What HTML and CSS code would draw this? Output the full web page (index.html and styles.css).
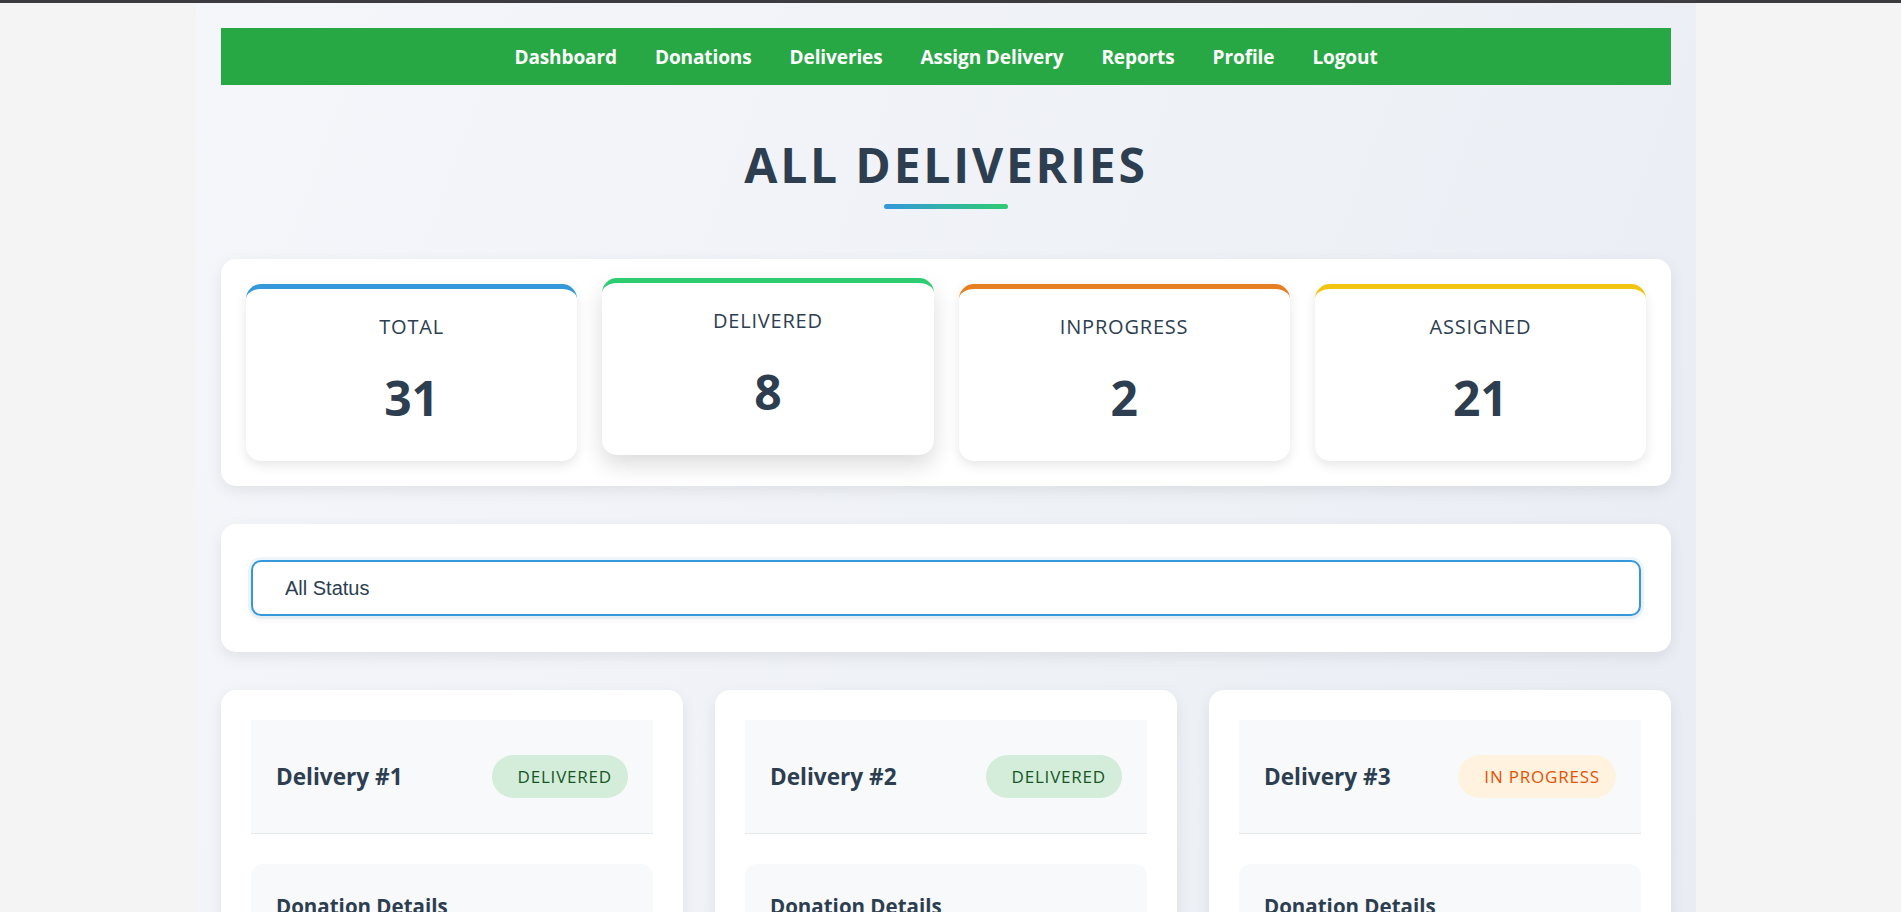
FILE: index.html
```html
<!DOCTYPE html>
<html lang="en">
<head>
<meta charset="utf-8">
<title>All Deliveries</title>
<link rel="stylesheet" href="styles.css">
</head>
<body>
<div class="topline"></div>
<div class="page">
  <div class="container">
    <nav class="navbar">
      <a href="#">Dashboard</a>
      <a href="#">Donations</a>
      <a href="#">Deliveries</a>
      <a href="#">Assign Delivery</a>
      <a href="#">Reports</a>
      <a href="#">Profile</a>
      <a href="#">Logout</a>
    </nav>

    <header class="page-header">
      <h1 class="page-title">ALL DELIVERIES</h1>
      <div class="title-underline"></div>
    </header>

    <section class="stats">
      <div class="stat-card stat-total">
        <div class="stat-label">TOTAL</div>
        <div class="stat-value">31</div>
      </div>
      <div class="stat-card stat-delivered is-hover">
        <div class="stat-label">DELIVERED</div>
        <div class="stat-value">8</div>
      </div>
      <div class="stat-card stat-progress">
        <div class="stat-label">INPROGRESS</div>
        <div class="stat-value">2</div>
      </div>
      <div class="stat-card stat-assigned">
        <div class="stat-label">ASSIGNED</div>
        <div class="stat-value">21</div>
      </div>
    </section>

    <section class="filter">
      <select class="status-select">
        <option>All Status</option>
        <option>Delivered</option>
        <option>In Progress</option>
        <option>Assigned</option>
      </select>
    </section>

    <section class="deliveries">
      <article class="delivery-card">
        <div class="delivery-header">
          <h2 class="delivery-title">Delivery #1</h2>
          <span class="badge badge-delivered">DELIVERED</span>
        </div>
        <div class="details-box">
          <h3 class="details-title">Donation Details</h3>
        </div>
      </article>
      <article class="delivery-card">
        <div class="delivery-header">
          <h2 class="delivery-title">Delivery #2</h2>
          <span class="badge badge-delivered">DELIVERED</span>
        </div>
        <div class="details-box">
          <h3 class="details-title">Donation Details</h3>
        </div>
      </article>
      <article class="delivery-card">
        <div class="delivery-header">
          <h2 class="delivery-title">Delivery #3</h2>
          <span class="badge badge-progress">IN PROGRESS</span>
        </div>
        <div class="details-box">
          <h3 class="details-title">Donation Details</h3>
        </div>
      </article>
    </section>
  </div>
</div>
</body>
</html>
```

FILE: styles.css
```css
* {
  box-sizing: border-box;
}

html, body {
  margin: 0;
  padding: 0;
}

body {
  background: #f4f4f4;
  font-family: "Open Sans", "Noto Sans", "DejaVu Sans", sans-serif;
  color: #2c3e50;
}

.topline {
  height: 3px;
  background: #3b3b40;
}

.page {
  padding-right: 9px;
}

.container {
  width: 1500px;
  margin: 0 auto;
  padding: 25px 25px 60px;
  background: linear-gradient(110deg, #f5f6fa 0%, #eef1f6 55%, #e8ebf2 100%);
  min-height: 1400px;
}

/* Navbar */
.navbar {
  height: 57px;
  background: #28a745;
  display: flex;
  justify-content: center;
  align-items: center;
  gap: 38px;
}

.navbar a {
  color: #ffffff;
  text-decoration: none;
  font-weight: 700;
  font-size: 19px;
  letter-spacing: -0.1px;
}

/* Title */
.page-header {
  display: flex;
  flex-direction: column;
  align-items: center;
  padding-top: 51px;
}

.page-title {
  margin: 0;
  font-size: 48px;
  line-height: 57px;
  font-weight: 700;
  letter-spacing: 2.8px;
  color: #2c3e50;
}

.title-underline {
  margin-top: 11px;
  width: 124px;
  height: 5px;
  border-radius: 3px;
  background: linear-gradient(90deg, #3498db, #2ecc71);
}

/* Stats */
.stats {
  margin-top: 50px;
  background: #ffffff;
  border-radius: 15px;
  box-shadow: 0 5px 15px rgba(0, 0, 0, 0.08);
  padding: 25px;
  display: grid;
  grid-template-columns: repeat(4, 1fr);
  gap: 25px;
}

.stat-card {
  background: #ffffff;
  border-radius: 15px;
  border-top: 5px solid #3498db;
  box-shadow: 0 4px 12px rgba(0, 0, 0, 0.1);
  padding: 26px 20px 35px;
  text-align: center;
}

.stat-card.is-hover {
  transform: translateY(-6px);
  box-shadow: 0 10px 22px rgba(0, 0, 0, 0.14);
}

.stat-total { border-top-color: #3498db; }
.stat-delivered { border-top-color: #2ecc71; }
.stat-progress { border-top-color: #e67e22; }
.stat-assigned { border-top-color: #f1c40f; }

.stat-label {
  font-size: 20px;
  line-height: 24px;
  letter-spacing: 0.8px;
  color: #2c3e50;
}

.stat-value {
  margin-top: 31px;
  font-size: 48px;
  line-height: 56px;
  font-weight: 700;
  color: #2c3e50;
}

/* Filter */
.filter {
  margin-top: 38px;
  background: #ffffff;
  border-radius: 15px;
  box-shadow: 0 5px 15px rgba(0, 0, 0, 0.08);
  padding: 36px 30px;
}

.status-select {
  display: block;
  width: 100%;
  height: 56px;
  appearance: none;
  -webkit-appearance: none;
  background: #ffffff;
  border: 2px solid #3498db;
  border-radius: 10px;
  padding: 0 32px;
  font-family: "Liberation Sans", Arial, sans-serif;
  font-size: 20px;
  color: #2c3e50;
  outline: none;
  box-shadow: 0 0 0 3px rgba(52, 152, 219, 0.08), 0 3px 8px rgba(0, 0, 0, 0.06);
}

/* Delivery cards */
.deliveries {
  margin-top: 38px;
  display: grid;
  grid-template-columns: repeat(3, 1fr);
  gap: 32px;
}

.delivery-card {
  background: #ffffff;
  border-radius: 15px;
  box-shadow: 0 5px 15px rgba(0, 0, 0, 0.08);
  padding: 30px;
}

.delivery-header {
  background: #f8f9fa;
  border-bottom: 1px solid #e6e9ec;
  padding: 35px 25px;
  display: flex;
  justify-content: space-between;
  align-items: center;
}

.delivery-title {
  margin: 0;
  font-size: 22.6px;
  line-height: 30px;
  font-weight: 700;
  color: #2c3e50;
}

.badge {
  display: inline-flex;
  align-items: center;
  height: 43px;
  padding: 0 16px 0 26px;
  border-radius: 22px;
  font-size: 17px;
  font-weight: 500;
  letter-spacing: 0.8px;
}

.badge-delivered {
  background: #d4edda;
  color: #155724;
}

.badge-progress {
  background: #fff3e0;
  color: #e65100;
}

.details-box {
  margin-top: 30px;
  background: #f8f9fa;
  border-radius: 12px;
  padding: 30px 25px;
  min-height: 220px;
}

.details-title {
  margin: 0;
  font-size: 20.5px;
  line-height: 25px;
  font-weight: 700;
  color: #2c3e50;
}
```
